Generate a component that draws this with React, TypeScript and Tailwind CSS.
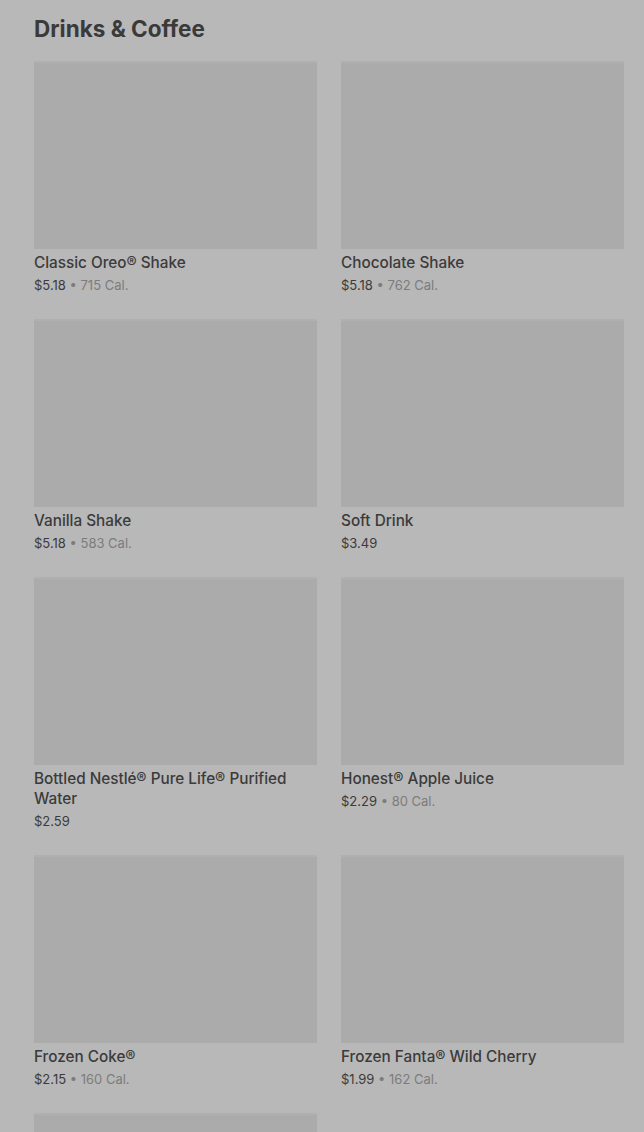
const items = [
  { name: 'Classic Oreo® Shake', price: '$5.18', cal: '715 Cal.' },
  { name: 'Chocolate Shake', price: '$5.18', cal: '762 Cal.' },
  { name: 'Vanilla Shake', price: '$5.18', cal: '583 Cal.' },
  { name: 'Soft Drink', price: '$3.49' },
  { name: 'Bottled Nestlé® Pure Life® Purified Water', price: '$2.59' },
  { name: 'Honest® Apple Juice', price: '$2.29', cal: '80 Cal.' },
  { name: 'Frozen Coke®', price: '$2.15', cal: '160 Cal.' },
  { name: 'Frozen Fanta® Wild Cherry', price: '$1.99', cal: '162 Cal.' },
];

function Card({ name, price, cal }: { name: string; price: string; cal?: string }) {
  return (
    <div className="flex flex-col">
      <div className="h-[188px] w-full border-t-2 border-[#b0b0b0] bg-[#ababab]" />
      <div className="mt-1 text-[15.3px] font-medium leading-5 text-[#3b3b3b]">{name}</div>
      <div className="mt-0.5 text-[13px] leading-5 text-[#3b3b3b]">
        {price}
        {cal && <span className="text-[#7c7c7c]"> • {cal}</span>}
      </div>
    </div>
  );
}

export default function App() {
  return (
    <div
      className="h-screen overflow-hidden bg-[#b8b8b8] pl-[34px] pr-5 pt-[15px]"
      style={{ fontFamily: 'Inter, "Noto Sans", sans-serif' }}
    >
      <h1 className="text-[22.5px] font-bold leading-7 text-[#3a3a3a]">Drinks &amp; Coffee</h1>
      <div className="mt-[18px] grid grid-cols-2 gap-x-6 gap-y-6">
        {items.map((it) => (
          <Card key={it.name} {...it} />
        ))}
        {/* next item, still loading */}
        <div className="h-[188px] w-full border-t-2 border-[#b0b0b0] bg-[#ababab]" />
      </div>
    </div>
  );
}
